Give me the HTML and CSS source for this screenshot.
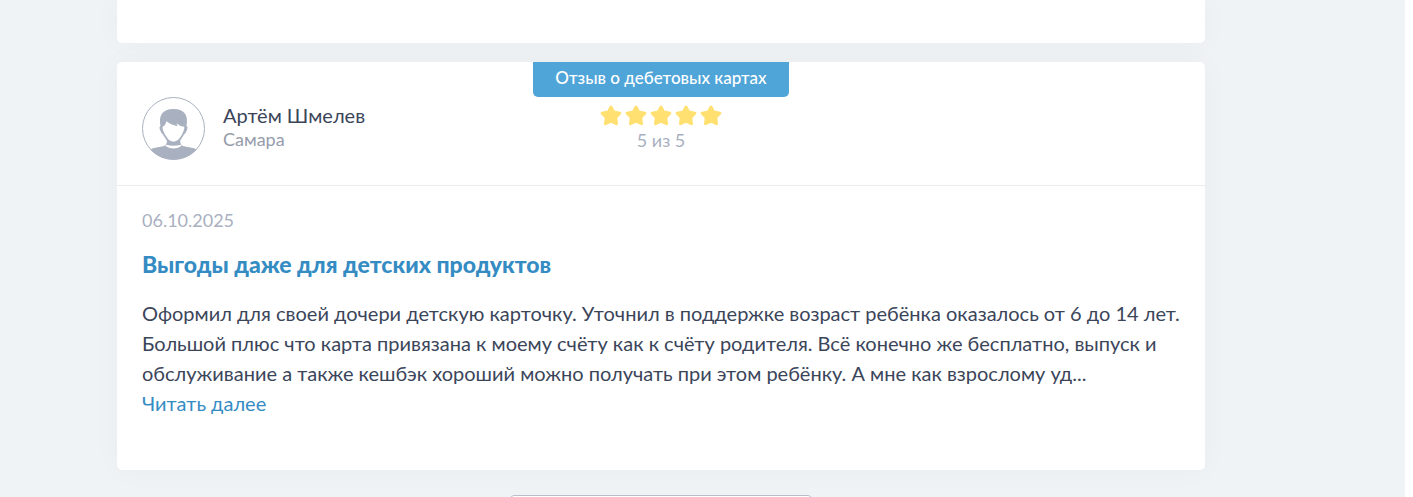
FILE: index.html
```html
<!DOCTYPE html>
<html lang="ru">
<head>
<meta charset="utf-8">
<title>Отзывы</title>
<link rel="stylesheet" href="styles.css">
</head>
<body>
<main class="page">
  <div class="reviews">
    <article class="card card-previous"></article>
    <article class="card">
      <header class="card-header">
        <div class="author">
          <svg class="avatar" viewBox="0 0 63 63" aria-hidden="true">
            <circle cx="31.5" cy="31.5" r="31" fill="#fff" stroke="#a9b0bf"/>
            <path d="M8.500 52.500C12 50 19 50.500 23 48.500Q25.200 47.500 25 41L38 41Q38 47.500 40 48.500C44 50.500 51 50 54.500 52.500C49 59 41 62.500 31.500 62.500S14 59 8.500 52.500Z" fill="#a9b0bf"/>
            <path d="M18.500 29C16.500 19 20 12 31.500 12S46.500 19 44.500 29Q46.500 30 44.500 34Q43.500 37 42 37.500C39 43 36 47 31.500 47S24 43 21 37.500Q19.500 37 18.500 34Q16.500 30 18.500 29Z" fill="#a9b0bf"/>
            <path d="M20.500 30Q23.500 28.500 24.500 24.300Q28.500 27.800 35.500 29.200L34.500 26.200Q38 29.500 42.300 29.800C42.500 33 41 35 40 37.500C37 42.500 35 44.500 31.500 44.500S26 42.500 23 37.500C21.800 35 20.500 33 20.500 30Z" fill="#fff"/>
            <path d="M24.500 47.800Q31.500 49.500 38.500 47.800L39.500 49Q31.500 54 23.500 49Z" fill="#fff"/>
          </svg>
          <div class="person">
            <div class="name">Артём Шмелев</div>
            <div class="city">Самара</div>
          </div>
        </div>
        <div class="summary">
          <div class="category">Отзыв о дебетовых картах</div>
          <div class="stars" role="img" aria-label="5 из 5">
            <svg class="star" viewBox="0 0 22 21"><use href="#star"/></svg>
            <svg class="star" viewBox="0 0 22 21"><use href="#star"/></svg>
            <svg class="star" viewBox="0 0 22 21"><use href="#star"/></svg>
            <svg class="star" viewBox="0 0 22 21"><use href="#star"/></svg>
            <svg class="star" viewBox="0 0 22 21"><use href="#star"/></svg>
          </div>
          <div class="score">5 из 5</div>
        </div>
      </header>
      <div class="card-body">
        <time class="date" datetime="2025-10-06">06.10.2025</time>
        <h2 class="title">Выгоды даже для детских продуктов</h2>
        <p class="text">Оформил для своей дочери детскую карточку. Уточнил в поддержке возраст ребёнка оказалось от 6 до 14 лет. Большой плюс что карта привязана к моему счёту как к счёту родителя. Всё конечно же бесплатно, выпуск и обслуживание а также кешбэк хороший можно получать при этом ребёнку. А мне как взрослому уд...</p>
        <a class="more" href="#">Читать далее</a>
      </div>
    </article>
    <button class="load-more" type="button" aria-label="Показать ещё"></button>
  </div>
</main>
<svg class="symbols" aria-hidden="true">
  <symbol id="star" viewBox="0 0 22 21">
    <path d="M11 2L13.600 7L19.800 8.200L15.700 12.500L16.500 18.700L11 16.200L5.500 18.700L6.300 12.500L2.200 8.200L8.400 7Z" fill="#ffe070" stroke="#ffe070" stroke-width="3" stroke-linejoin="round"/>
  </symbol>
</svg>
</body>
</html>
```
FILE: styles.css
```css
* { box-sizing: border-box; }
html { background: #fff; }
body {
  margin: 0;
  font-family: Lato, "Open Sans", sans-serif;
  color: #3b455a;
}
.page {
  height: 100vh;
  overflow: hidden;
  margin-right: 8px;
  padding: 0 200px 0 117px;
  background: #f0f3f6;
}
.reviews {
  display: flex;
  flex-direction: column;
}
.card {
  margin-bottom: 25px;
  background: #fff;
  border-radius: 5px;
  box-shadow: 0 0 30px rgba(50, 10, 10, 0.03);
}
.card-previous {
  height: 43px;
  margin-bottom: 19px;
  border-radius: 0 0 5px 5px;
}
.card-header {
  display: grid;
  grid-template-columns: 1fr auto 1fr;
  height: 124px;
  padding: 0 25px;
  border-bottom: 1px solid #e9ebee;
}
.author {
  display: flex;
  gap: 18px;
  padding-top: 35px;
}
.avatar { width: 63px; height: 63px; }
.person { padding-top: 6px; }
.name { font-size: 20px; line-height: 24px; }
.city {
  font-size: 18px;
  line-height: 24px;
  color: #959cab;
}
.summary { text-align: center; }
.category {
  height: 35px;
  padding: 0 22px;
  border-radius: 0 0 5px 5px;
  background: #4fa4d8;
  color: #fff;
  font-size: 17px;
  font-weight: 500;
  line-height: 32px;
}
.stars {
  display: flex;
  justify-content: center;
  gap: 3px;
  margin-top: 8px;
}
.star { width: 22px; height: 21px; }
.score {
  margin-top: 2px;
  color: #a9b0bf;
  font-size: 18px;
  line-height: 24px;
}
.card-body { padding: 22px 25px 52px; }
.date {
  display: block;
  color: #a9b0bf;
  font-size: 18px;
  line-height: 24px;
}
.title {
  margin: 18px 0 20px;
  color: #358cc3;
  font-size: 23px;
  font-weight: 900;
  line-height: 28px;
}
.text { margin: 0; font-size: 20px; line-height: 30px; }
.more {
  color: #358cc3;
  font-size: 20px;
  line-height: 30px;
  text-decoration: none;
}
.load-more {
  align-self: center;
  width: 302px;
  height: 50px;
  border: 1px solid #b9bfc9;
  border-radius: 4px;
  background: #fff;
}
.symbols { display: none; }
```
